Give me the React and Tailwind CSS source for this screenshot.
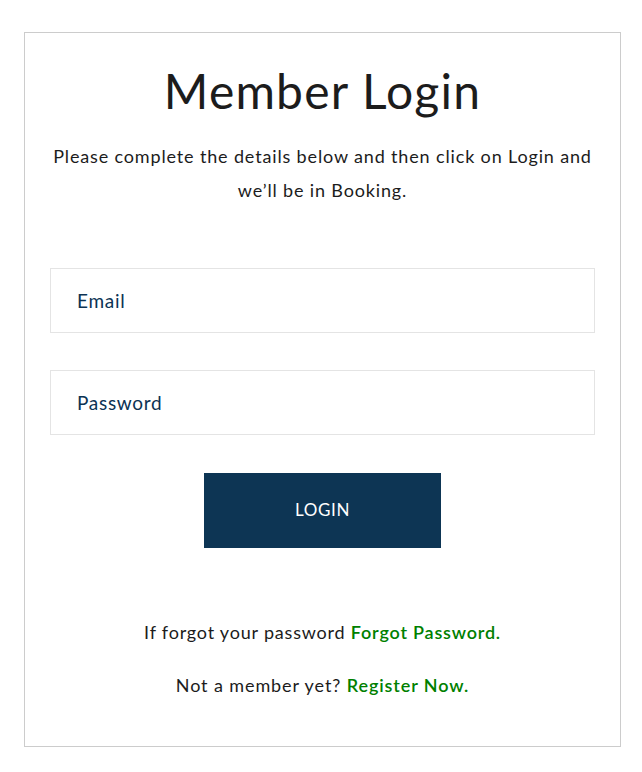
import React from "react"

const font = { fontFamily: "Lato, 'Liberation Sans', sans-serif" }

const App = () => {
  return (
    <div className="min-h-[772px] bg-white pl-[24px] pr-[21px] pt-[32px]" style={font}>
      <div className="flex h-[715px] flex-col border border-[#cccccc] px-[25px] pt-[18px]">
        <h1 className="text-center text-[48px] font-normal leading-[80px] tracking-[1.2px] text-[#1c1c1c]">
          Member Login
        </h1>
        <p className="mt-[8px] text-center text-[18px] leading-[34px] tracking-[0.85px] text-[#1c1c1c]">
          Please complete the details below and then click on Login and
          <br />
          we’ll be in Booking.
        </p>

        <form className="mt-[61px] flex flex-col">
          <input
            type="email"
            placeholder="Email"
            className="h-[65px] w-full border border-[#e4e4e4] px-[26px] pb-[1px] text-[19px] tracking-[0.7px] text-[#0c3354] outline-none placeholder:text-[#0c3354]"
          />
          <input
            type="password"
            placeholder="Password"
            className="mt-[37px] h-[65px] w-full border border-[#e4e4e4] px-[26px] text-[19px] tracking-[0.7px] text-[#0c3354] outline-none placeholder:text-[#0c3354]"
          />
          <button
            type="button"
            className="mx-auto mt-[38px] h-[75px] w-[237px] pb-[1px] bg-[#0d3554] text-[17px] tracking-[0.6px] text-white"
          >
            LOGIN
          </button>
        </form>

        <p className="mt-[69px] text-center text-[18px] leading-[30px] tracking-[0.8px] text-[#1c1c1c]">
          If forgot your password{" "}
          <a href="#" className="font-semibold text-[#008000]">
            Forgot Password.
          </a>
        </p>
        <p className="mt-[23px] text-center text-[18px] leading-[30px] tracking-[0.9px] text-[#1c1c1c]">
          Not a member yet?{" "}
          <a href="#" className="font-semibold text-[#008000]">
            Register Now.
          </a>
        </p>
      </div>
    </div>
  )
}

export default App
